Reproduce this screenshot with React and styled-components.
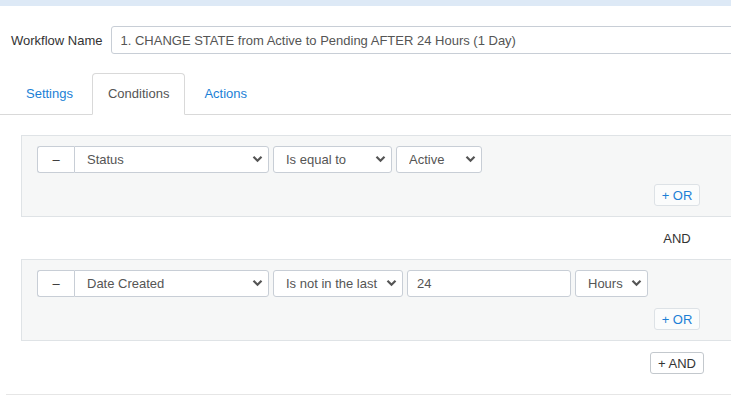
import React from 'react'
import styled, { createGlobalStyle } from 'styled-components'

const GlobalStyle = createGlobalStyle`
  body {
    margin: 0;
    overflow: hidden;
    background: #fff;
    font-family: "Liberation Sans", Arial, sans-serif;
    font-size: 13px;
    color: #333;
  }
`

const Chevron = () => (
  <svg width="11" height="8" viewBox="0 0 11 8">
    <path d="M1.5 1.8 L5.5 5.8 L9.5 1.8" fill="none" stroke="#555" strokeWidth="2.2" />
  </svg>
)

const Select = ({ width, value, options, attached }) => (
  <SelectWrap $width={width}>
    <SelectBox defaultValue={value} $attached={attached}>
      {options.map(o => <option key={o}>{o}</option>)}
    </SelectBox>
    <ChevronSpot><Chevron /></ChevronSpot>
  </SelectWrap>
)

const conditionGroups = [
  {
    field: 'Status',
    fields: ['Status', 'Date Created'],
    op: 'Is equal to',
    ops: ['Is equal to', 'Is not equal to'],
    opWidth: 119,
    value: { type: 'select', value: 'Active', width: 86 },
  },
  {
    field: 'Date Created',
    fields: ['Status', 'Date Created'],
    op: 'Is not in the last',
    ops: ['Is in the last', 'Is not in the last'],
    opWidth: 130,
    value: { type: 'number', value: '24', width: 164 },
    unit: { value: 'Hours', width: 73 },
  },
]

const App = () => {
  return (
    <Page>
      <GlobalStyle />
      <TopBar />
      <NameRow>
        <NameLabel htmlFor="wf-name">Workflow Name</NameLabel>
        <NameInput id="wf-name" defaultValue="1. CHANGE STATE from Active to Pending AFTER 24 Hours (1 Day)" />
      </NameRow>
      <Tabs>
        <Tab>Settings</Tab>
        <Tab $active>Conditions</Tab>
        <Tab>Actions</Tab>
      </Tabs>
      <ConditionsArea>
        {conditionGroups.map((g, i) => (
          <React.Fragment key={i}>
            {i > 0 && (
              <Connector>
                <EndCell>AND</EndCell>
              </Connector>
            )}
            <Group>
              <Row>
                <RemoveButton>–</RemoveButton>
                <Select width={195} value={g.field} options={g.fields} attached />
                <Select width={g.opWidth} value={g.op} options={g.ops} />
                {g.value.type === 'select' ? (
                  <Select width={g.value.width} value={g.value.value} options={['Active', 'Pending']} />
                ) : (
                  <ValueInput $width={g.value.width} defaultValue={g.value.value} />
                )}
                {g.unit && <Select width={g.unit.width} value={g.unit.value} options={['Hours', 'Days']} />}
              </Row>
              <GroupFooter>
                <EndCell>
                  <OrButton>+ OR</OrButton>
                </EndCell>
              </GroupFooter>
            </Group>
          </React.Fragment>
        ))}
        <AddRow>
          <EndCell>
            <AndButton>+ AND</AndButton>
          </EndCell>
        </AddRow>
      </ConditionsArea>
    </Page>
  )
}

const Page = styled.div`
  width: 760px;
`

const TopBar = styled.div`
  height: 6px;
  background: #dde9f6;
`

const NameRow = styled.div`
  display: flex;
  align-items: center;
  gap: 8px;
  margin-top: 20px;
  padding-left: 11px;
`

const NameLabel = styled.label`
  color: #333;
`

const NameInput = styled.input`
  flex: 1;
  height: 28px;
  box-sizing: border-box;
  border: 1px solid #c8ced6;
  border-radius: 3px;
  padding: 0 9px;
  font: inherit;
  color: #555;
  outline: none;
`

const Tabs = styled.div`
  display: flex;
  gap: 3px;
  margin-top: 19px;
  padding-left: 10px;
  border-bottom: 1px solid #d9d9d9;
`

const Tab = styled.div`
  padding: 12px 15px;
  line-height: 16px;
  margin-bottom: -1px;
  border: 1px solid ${p => (p.$active ? '#d9d9d9' : 'transparent')};
  border-bottom-color: ${p => (p.$active ? '#fff' : 'transparent')};
  border-radius: 4px 4px 0 0;
  background: ${p => (p.$active ? '#fff' : 'transparent')};
  color: ${p => (p.$active ? '#555' : '#1b7fd6')};
  cursor: pointer;
`

const ConditionsArea = styled.div`
  margin-left: 6px;
  padding: 20px 0 20px 15px;
  border-bottom: 1px solid #e6e6e6;
`

const Group = styled.div`
  background: #f6f7f7;
  border: 1px solid #dfe3e6;
  padding: 10px 52px 10px 15px;
`

const Row = styled.div`
  display: flex;
  gap: 4px;
  height: 27px;
`

const RemoveButton = styled.button`
  width: 37px;
  height: 27px;
  margin-right: -4px;
  box-sizing: border-box;
  border: 1px solid #c8ced6;
  border-right: none;
  border-radius: 3px 0 0 3px;
  background: #fff;
  color: #333;
  font: inherit;
  padding: 0;
`

const SelectWrap = styled.div`
  position: relative;
  width: ${p => p.$width}px;
  height: 27px;
`

const SelectBox = styled.select`
  appearance: none;
  width: 100%;
  height: 100%;
  box-sizing: border-box;
  border: 1px solid #c8ced6;
  border-radius: ${p => (p.$attached ? '0 3px 3px 0' : '3px')};
  background: #fff;
  padding: 0 24px 0 12px;
  font: inherit;
  color: #555;
  outline: none;
`

const ChevronSpot = styled.span`
  position: absolute;
  right: 6px;
  top: 9px;
  pointer-events: none;
  line-height: 0;
`

const ValueInput = styled.input`
  width: ${p => p.$width}px;
  height: 27px;
  box-sizing: border-box;
  border: 1px solid #c8ced6;
  border-radius: 3px;
  padding: 0 9px;
  font: inherit;
  color: #555;
  outline: none;
`

const GroupFooter = styled.div`
  display: flex;
  justify-content: flex-end;
  margin-top: 11px;
`

const EndCell = styled.div`
  width: 60px;
  display: flex;
  justify-content: center;
`

const OrButton = styled.button`
  height: 22px;
  padding: 0 7px;
  border: 1px solid #dde2e6;
  border-radius: 3px;
  background: #fbfcfc;
  color: #1b7fd6;
  font: inherit;
`

const Connector = styled.div`
  display: flex;
  justify-content: flex-end;
  align-items: center;
  height: 42px;
  padding-right: 53px;
  color: #333;
`

const AddRow = styled.div`
  display: flex;
  justify-content: flex-end;
  margin-top: 11px;
  padding-right: 53px;
`

const AndButton = styled.button`
  height: 22px;
  padding: 0 7px;
  border: 1px solid #c3c8cd;
  border-radius: 3px;
  background: #fff;
  color: #333;
  font: inherit;
`

export default App
